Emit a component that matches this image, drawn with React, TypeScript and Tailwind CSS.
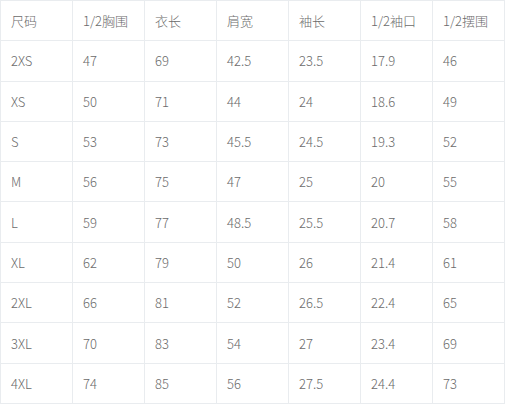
import React from "react";

const header = ["尺码", "1/2胸围", "衣长", "肩宽", "袖长", "1/2袖口", "1/2摆围"];
const rows = [
  ["2XS", "47", "69", "42.5", "23.5", "17.9", "46"],
  ["XS", "50", "71", "44", "24", "18.6", "49"],
  ["S", "53", "73", "45.5", "24.5", "19.3", "52"],
  ["M", "56", "75", "47", "25", "20", "55"],
  ["L", "59", "77", "48.5", "25.5", "20.7", "58"],
  ["XL", "62", "79", "50", "26", "21.4", "61"],
  ["2XL", "66", "81", "52", "26.5", "22.4", "65"],
  ["3XL", "70", "83", "54", "27", "23.4", "69"],
  ["4XL", "74", "85", "56", "27.5", "24.4", "73"],
];

export default function App() {
  const all = [header, ...rows];
  return (
    <div
      className="w-[506px] h-[405px] bg-white overflow-hidden"
      style={{ fontFamily: '"Noto Sans CJK SC", "Noto Sans", sans-serif' }}
    >
      <table className="border-collapse w-[505px] table-fixed text-[13px] text-[#6b6b6b] font-light">
        <tbody>
          {all.map((r, i) => (
            <tr key={i} className="h-[40.3px]">
              {r.map((c, j) => (
                <td
                  key={j}
                  className="border border-[#e9ecef] pl-[10px] align-middle w-[72px] leading-none"
                >
                  {c}
                </td>
              ))}
            </tr>
          ))}
        </tbody>
      </table>
    </div>
  );
}
